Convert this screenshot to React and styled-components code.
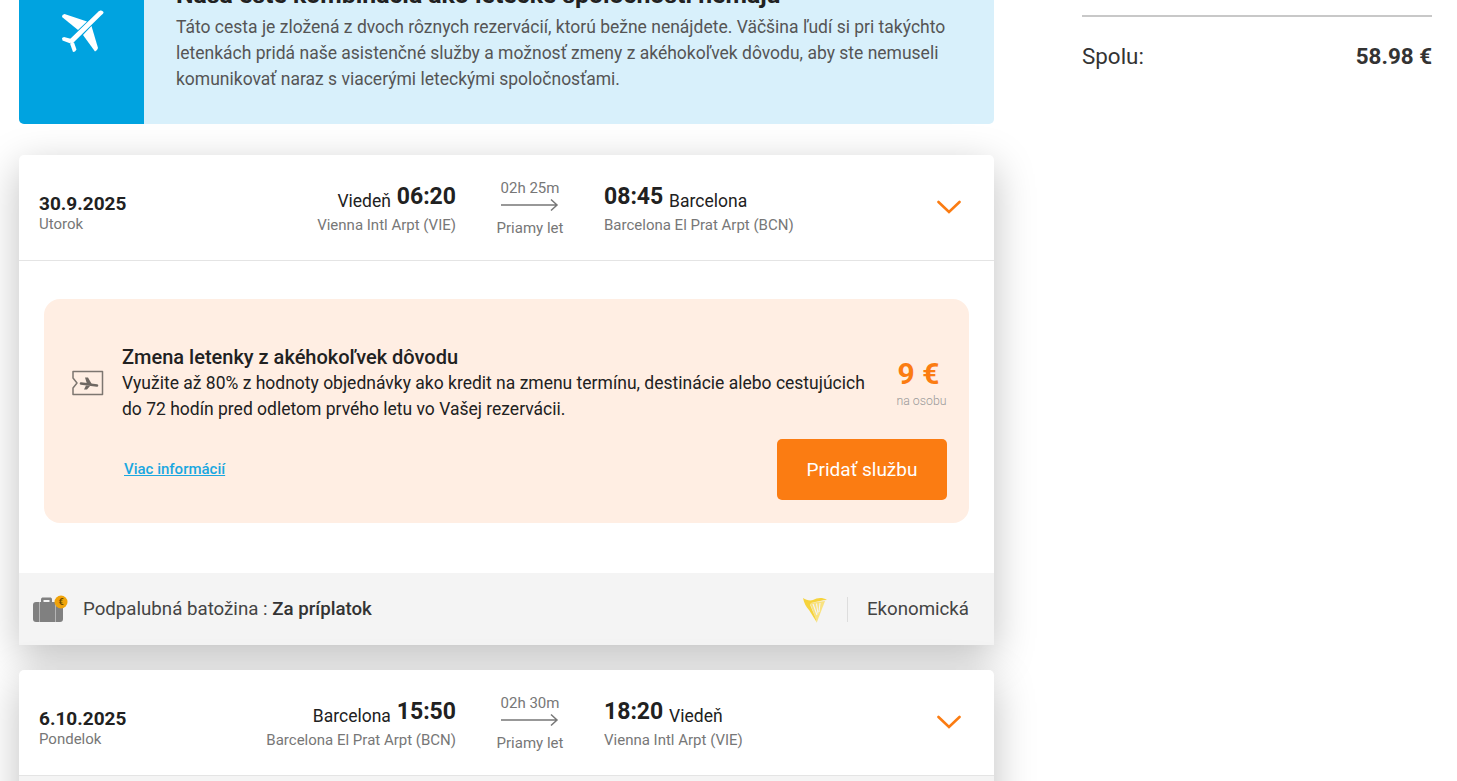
import React from "react";
import styled, { createGlobalStyle } from "styled-components";

const GlobalStyle = createGlobalStyle`
  html, body {
    margin: 0;
    height: 781px;
    overflow: hidden;
    background: #fff;
    font-family: Roboto, "Liberation Sans", sans-serif;
    color: #212121;
  }
`;

const Page = styled.div`
  display: flex;
  align-items: flex-start;
  width: 1457px;
  height: 781px;
  overflow: hidden;
  padding-left: 19px;
  box-sizing: border-box;
`;

const Main = styled.div`
  width: 975px;
  flex: none;
  margin-top: -40px;
`;

const Side = styled.aside`
  width: 350px;
  flex: none;
  margin-left: 88px;
  padding-top: 15px;
`;

const Total = styled.div`
  display: flex;
  justify-content: space-between;
  align-items: center;
  border-top: 2px solid #c8c8c8;
  padding-top: 25px;
  font-size: 22.4px;
  line-height: 28px;
  color: #333;
`;

const TotalPrice = styled.strong`
  font-weight: 700;
`;

const Banner = styled.div`
  display: flex;
  height: 164px;
  border-radius: 0 0 5px 5px;
  overflow: hidden;
  background: #d8f0fb;
  margin-bottom: 31px;
`;

const BannerIcon = styled.div`
  width: 125px;
  flex: none;
  background: #00a3e0;
  display: flex;
  justify-content: center;
  padding-top: 49px;
  box-sizing: border-box;
`;

const BannerBody = styled.div`
  padding: 0 32px;
`;

const BannerTitle = styled.h2`
  margin: 21px 0 0;
  font-size: 24.8px;
  line-height: 28px;
  font-weight: 700;
  color: #212121;
`;

const BannerText = styled.p`
  margin: 5px 0 0;
  font-size: 17.5px;
  line-height: 26px;
  color: #555;
`;

const Card = styled.section`
  background: #fff;
  border-radius: 5px 5px 0 0;
  box-shadow: 0 12px 40px rgba(0, 0, 0, 0.25);
  margin-bottom: 25px;
`;

const FlightRow = styled.div`
  display: grid;
  grid-template-columns: 160px 257px 148px 1fr auto;
  align-items: center;
  height: 105px;
  padding: 0 33px 0 20px;
  border-bottom: 1px solid #e4e4e4;
`;

const DateCol = styled.div`
  padding-top: 10px;
`;

const DateText = styled.div`
  font-size: 19px;
  line-height: 23px;
  font-weight: 700;
  color: #212121;
`;

const Muted = styled.div`
  font-size: 15px;
  line-height: 18px;
  color: #777;
`;

const Place = styled.div`
  padding-top: 1px;
  text-align: ${(p) => (p.$right ? "right" : "left")};
`;

const PlaceTop = styled.div`
  font-size: 17.5px;
  line-height: 30px;
  color: #212121;
`;

const Time = styled.b`
  font-size: 23px;
  font-weight: 700;
  vertical-align: 3px;
  margin: ${(p) => (p.$dep ? "0 0 0 1.5px" : "0 1.5px 0 0")};
`;

const Duration = styled.div`
  text-align: center;
  font-size: 15px;
  line-height: 20px;
  color: #777;
`;

const Arrow = styled.svg`
  display: block;
  margin: 0 auto 6px;
`;

const ChevronIcon = styled.svg`
  margin-bottom: 2px;
`;

const Offer = styled.div`
  margin: 38px 25px 50px;
  height: 224px;
  box-sizing: border-box;
  background: #ffeee3;
  border-radius: 16px;
  padding: 45px 22px 22px 28px;
`;

const OfferTop = styled.div`
  display: flex;
  align-items: center;
`;

const OfferIcon = styled.svg`
  flex: none;
  margin-right: 18px;
`;

const OfferText = styled.div`
  flex: 1;
`;

const OfferTitle = styled.div`
  font-size: 20px;
  line-height: 26px;
  font-weight: 500;
  color: #212121;
`;

const OfferDesc = styled.div`
  font-size: 17.5px;
  line-height: 26px;
  color: #212121;
`;

const PriceBox = styled.div`
  width: 51px;
  flex: none;
  margin: -2px 0 0 14px;
  text-align: center;
`;

const Price = styled.div`
  font-size: 30px;
  line-height: 37px;
  font-weight: 700;
  padding-right: 6px;
  margin-bottom: 1px;
  white-space: nowrap;
  color: #fb7c12;
`;

const PriceNote = styled.div`
  font-size: 12.3px;
  line-height: 16px;
  font-weight: 300;
  white-space: nowrap;
  color: #999;
`;

const OfferBottom = styled.div`
  display: flex;
  justify-content: space-between;
  align-items: center;
  margin-top: 17px;
  padding-left: 52px;
`;

const MoreLink = styled.a`
  font-size: 15px;
  font-weight: 500;
  padding-bottom: 2px;
  color: #1aa7e0;
  text-decoration: underline;
`;

const AddButton = styled.button`
  width: 170px;
  height: 61px;
  border: 0;
  border-radius: 5px;
  background: #fb7c12;
  color: #fff;
  font: 400 19px Roboto, sans-serif;
`;

const Footer = styled.div`
  display: flex;
  align-items: center;
  height: 72px;
  background: #f4f4f4;
  padding: 0 25px 0 14px;
`;

const Bag = styled.svg`
  flex: none;
  margin-right: 14px;
`;

const FooterText = styled.div`
  flex: 1;
  font-size: 18.7px;
  color: #444;
`;

const FooterStrong = styled.b`
  font-weight: 500;
  color: #333;
`;

const Divider = styled.div`
  width: 1px;
  height: 25px;
  background: #ddd;
  margin: 0 19px 0 19px;
`;

const Cabin = styled.div`
  font-size: 18.7px;
  color: #444;
`;

const Chevron = () => (
  <ChevronIcon width="24" height="14" viewBox="0 0 24 14" fill="none">
    <path d="M1.500 2 L12 12 L22.500 2" stroke="#fb7c12" strokeWidth="2.600" strokeLinecap="round" />
  </ChevronIcon>
);

const DurationArrow = () => (
  <Arrow width="58" height="14" viewBox="0 0 58 14" fill="none">
    <path d="M0 7H56M50 1.500 56 7 50 12.500" stroke="#777" strokeWidth="1.500" />
  </Arrow>
);

const Flight = ({ date, day, from, fromAirport, dep, dur, arr, to, toAirport }) => (
  <FlightRow>
    <DateCol>
      <DateText>{date}</DateText>
      <Muted>{day}</Muted>
    </DateCol>
    <Place $right>
      <PlaceTop>
        {from} <Time $dep>{dep}</Time>
      </PlaceTop>
      <Muted>{fromAirport}</Muted>
    </Place>
    <Duration>
      {dur}
      <DurationArrow />
      Priamy let
    </Duration>
    <Place>
      <PlaceTop>
        <Time>{arr}</Time> {to}
      </PlaceTop>
      <Muted>{toAirport}</Muted>
    </Place>
    <Chevron />
  </FlightRow>
);

export default function App() {
  return (
    <Page>
      <GlobalStyle />
      <Main>
        <Banner>
          <BannerIcon>
            <svg width="44" height="44" viewBox="0 0 44 44" fill="#fff">
              <path d="M43 2.500c-1.500-1.500-3.500-1-5 .5L8.500 31.500l3.500 3.500L41 6.500c1.500-1.500 3.500-2.500 2-4z" />
              <path d="M2.500 6 2 8 18 21l9-8.500L4.500 5z" />
              <path d="M37 41l-2 1.500L23 26l8.500-9L38 39z" />
              <path d="M2 29l.5 2.500 8 3 1-4.500-7.500-2z" />
              <path d="M15 42.500l-2 .5-3-8.500 4-1 2.500 7z" />
            </svg>
          </BannerIcon>
          <BannerBody>
            <BannerTitle>Naša ešte kombinácia ako letecké spoločnosti nemajú</BannerTitle>
            <BannerText>
              Táto cesta je zložená z dvoch rôznych rezervácií, ktorú bežne nenájdete. Väčšina ľudí si pri takýchto
              letenkách pridá naše asistenčné služby a možnosť zmeny z akéhokoľvek dôvodu, aby ste nemuseli
              komunikovať naraz s viacerými leteckými spoločnosťami.
            </BannerText>
          </BannerBody>
        </Banner>

        <Card>
          <Flight
            date="30.9.2025"
            day="Utorok"
            from="Viedeň"
            fromAirport="Vienna Intl Arpt (VIE)"
            dep="06:20"
            dur="02h 25m"
            arr="08:45"
            to="Barcelona"
            toAirport="Barcelona El Prat Arpt (BCN)"
          />
          <Offer>
            <OfferTop>
              <OfferIcon width="32" height="26" viewBox="0 0 32 26" fill="none">
                <path d="M1 1.500h29.500v23H1V18l4-5-4-5z" stroke="#7d7670" strokeWidth="1.500" strokeLinejoin="round" />
                <path d="M9 13.500l16 2" stroke="#6f6862" strokeWidth="2.600" strokeLinecap="round" />
                <path d="M13 7.500h3l4 7-5-.5zM14 15.500l-2 4h3l3-3.500z" fill="#6f6862" />
              </OfferIcon>
              <OfferText>
                <OfferTitle>Zmena letenky z akéhokoľvek dôvodu</OfferTitle>
                <OfferDesc>
                  Využite až 80% z hodnoty objednávky ako kredit na zmenu termínu, destinácie alebo cestujúcich do 72
                  hodín pred odletom prvého letu vo Vašej rezervácii.
                </OfferDesc>
              </OfferText>
              <PriceBox>
                <Price>9 €</Price>
                <PriceNote>na osobu</PriceNote>
              </PriceBox>
            </OfferTop>
            <OfferBottom>
              <MoreLink href="#">Viac informácií</MoreLink>
              <AddButton>Pridať službu</AddButton>
            </OfferBottom>
          </Offer>
          <Footer>
            <Bag width="36" height="28" viewBox="0 0 36 28">
              <path d="M8 7V4.500C8 3 9 2.500 10 2.500h7c1 0 2 .5 2 2V7h-2.500V5h-6v2z" fill="#808080" />
              <rect x="0" y="7" width="30" height="20" rx="3" fill="#808080" />
              <rect x="6" y="7" width="1" height="20" fill="#b5b5b5" />
              <rect x="22" y="7" width="1" height="20" fill="#b5b5b5" />
              <circle cx="28" cy="7" r="6.500" fill="#f0a30a" />
              <text x="28" y="10" textAnchor="middle" fontSize="9" fontFamily="Roboto" fontWeight="700" fill="#6b4a00">€</text>
            </Bag>
            <FooterText>
              Podpalubná batožina : <FooterStrong>Za príplatok</FooterStrong>
            </FooterText>
            <svg width="26" height="27" viewBox="0 0 26 27" fill="none">
              <path d="M8 7L23 5 15 26z" fill="#f9e27f" />
              <path d="M11 8l4 11M14.500 7.500l1.500 10M18 7l-1 9" stroke="#f4f4f4" strokeWidth="1.100" />
              <path d="M1 2C2 7 4 11 7 14c3 5 6 9 8 13-1-5-4-11-6-16-1-2-1-3 0-4 5-1 11-3 16-3-5-3-10-2-14 0C8 5 4 4 1 2z" fill="#f6d33c" />
            </svg>
            <Divider />
            <Cabin>Ekonomická</Cabin>
          </Footer>
        </Card>

        <Card>
          <Flight
            date="6.10.2025"
            day="Pondelok"
            from="Barcelona"
            fromAirport="Barcelona El Prat Arpt (BCN)"
            dep="15:50"
            dur="02h 30m"
            arr="18:20"
            to="Viedeň"
            toAirport="Vienna Intl Arpt (VIE)"
          />
          <Footer />
        </Card>
      </Main>
      <Side>
        <Total>
          <span>Spolu:</span>
          <TotalPrice>58.98 €</TotalPrice>
        </Total>
      </Side>
    </Page>
  );
}
